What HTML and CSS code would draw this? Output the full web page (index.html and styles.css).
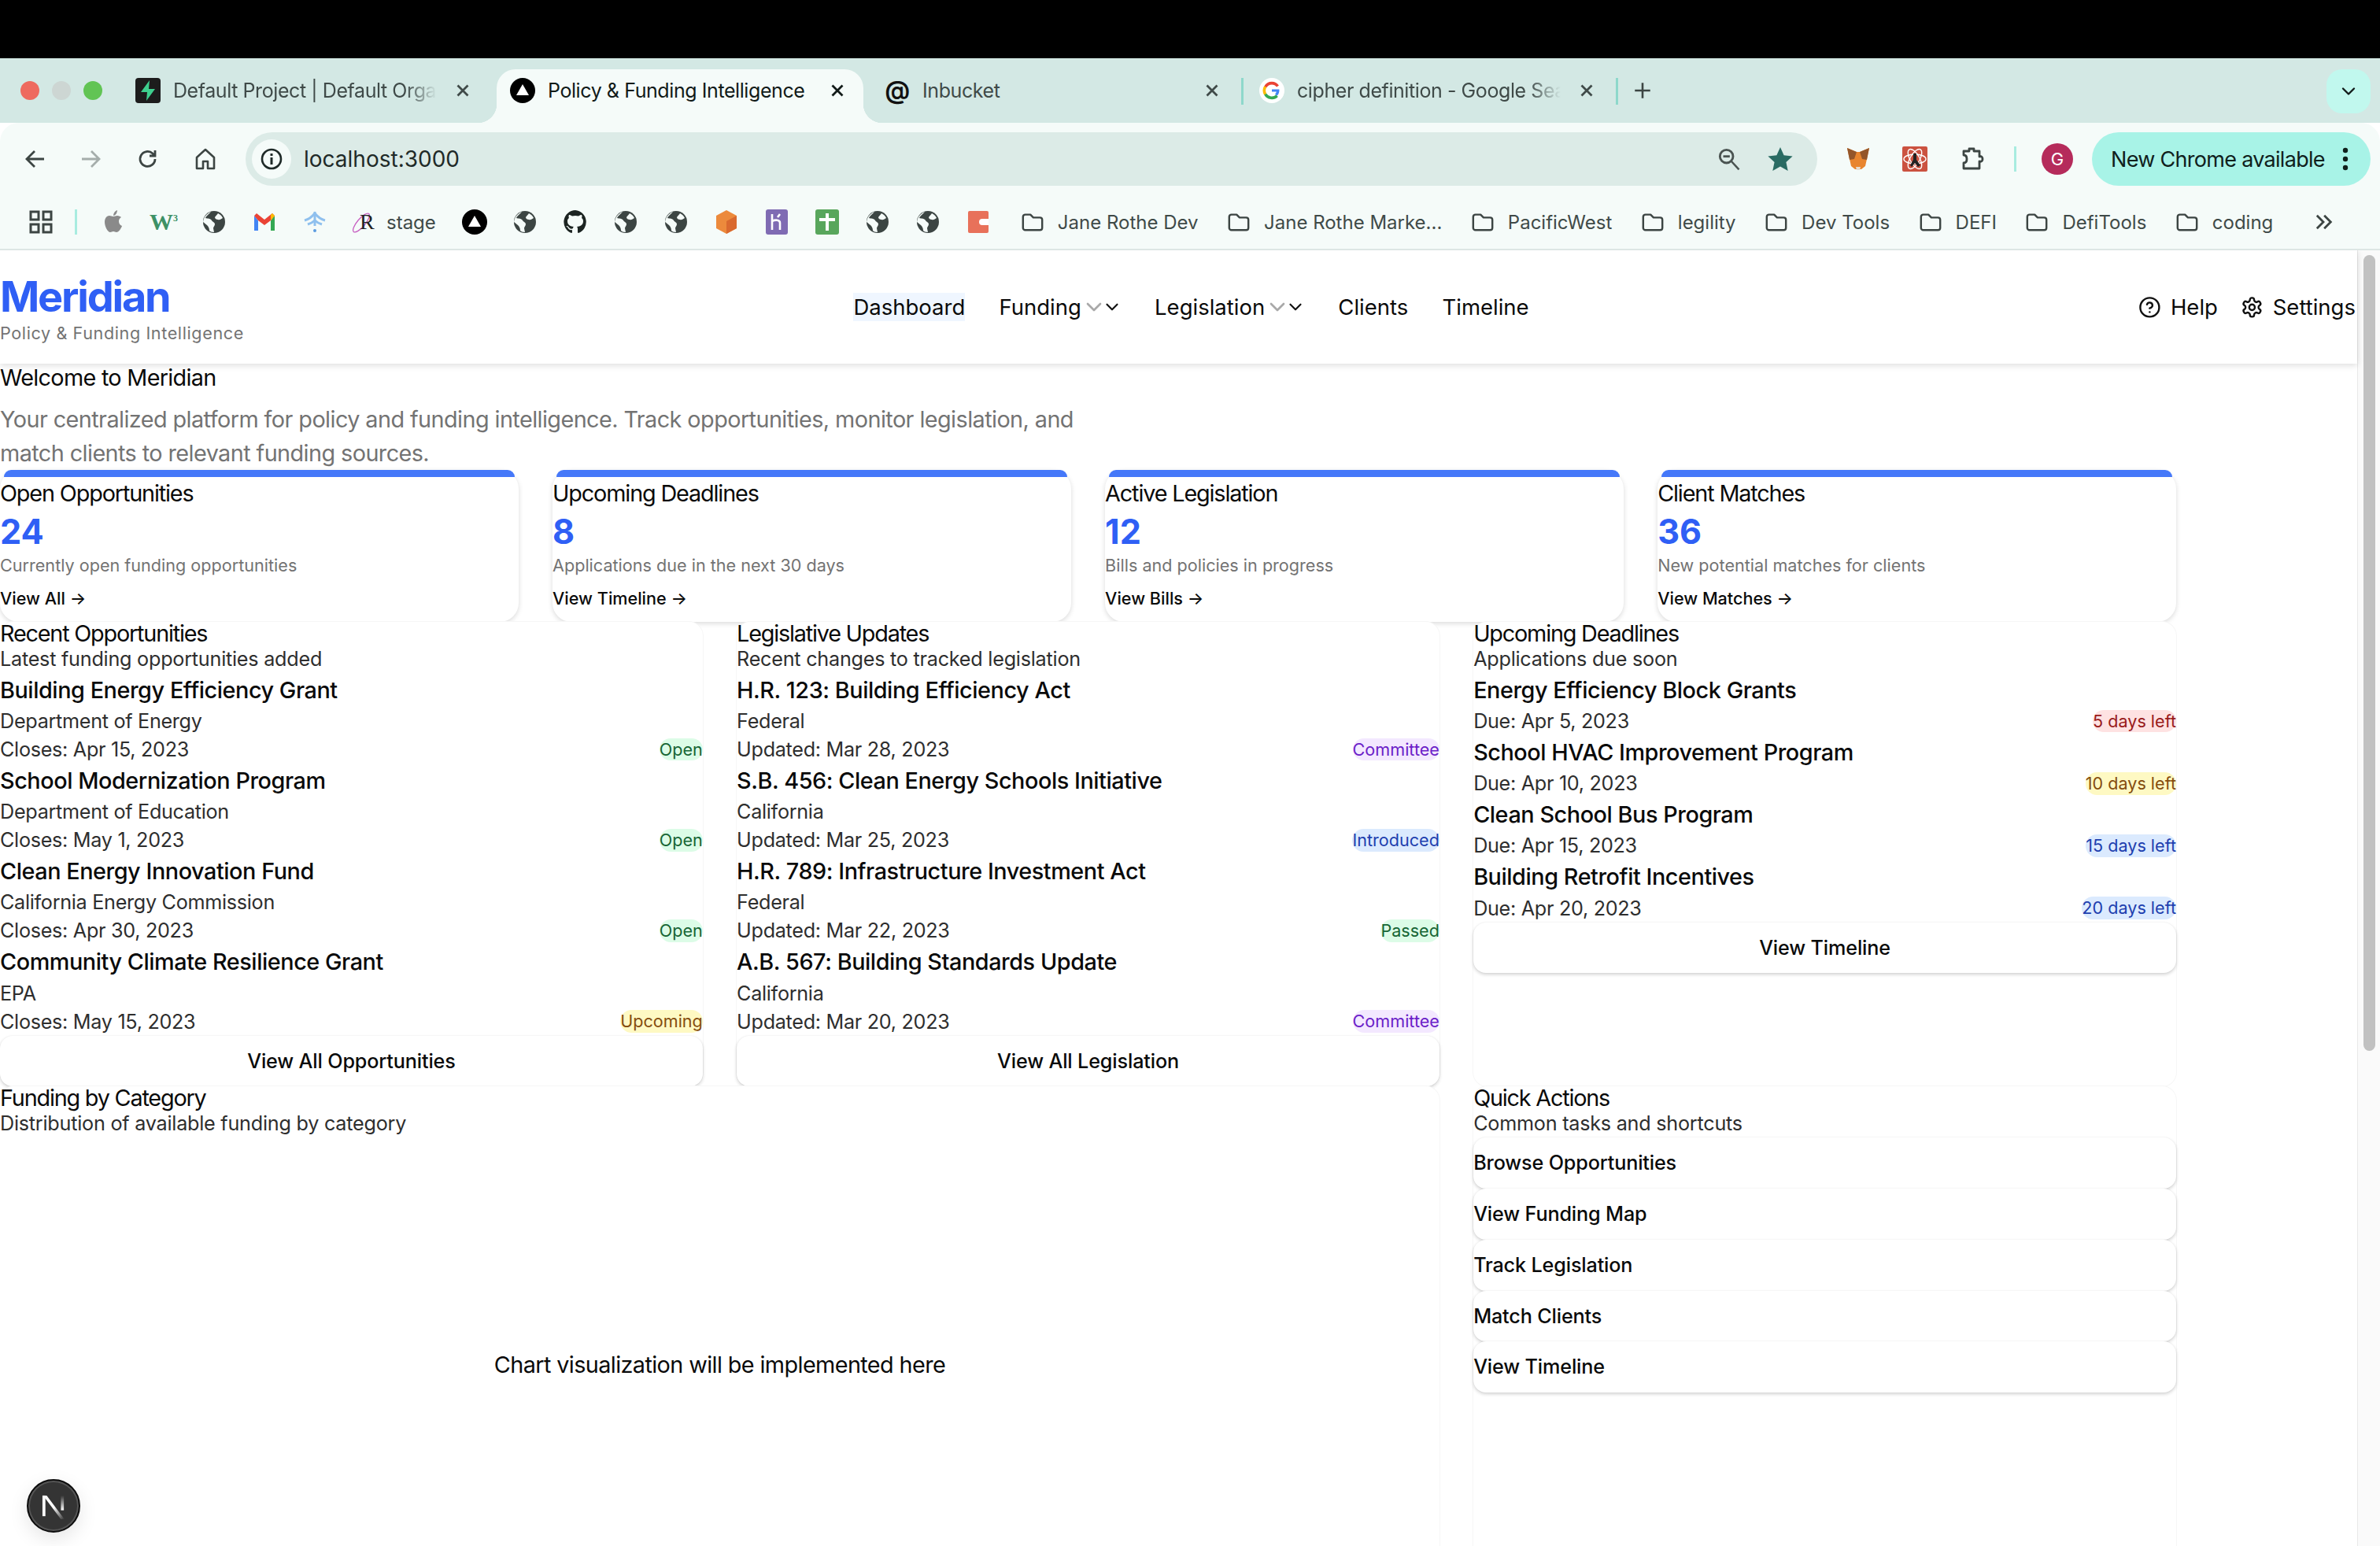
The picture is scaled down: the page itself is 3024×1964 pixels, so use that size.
FILE: index.html
```html
<!DOCTYPE html>
<html lang="en">
<head>
  <meta charset="UTF-8">
  <title>Policy &amp; Funding Intelligence</title>
  <link rel="stylesheet" href="styles.css">
</head>
<body>
  <svg class="sprites" width="0" height="0">
    <symbol id="globe" viewBox="0 0 32 32">
      <circle cx="16" cy="16" r="14" fill="#3c4543"/>
      <path d="M12 3c-2 3-6 5-7 8 3 1 6 0 8 3 1 2 4 2 4 5 0 2-2 3-2 5l1 5c-3 0-5-1-6-2 0-3-1-5-3-7-2-1-3-3-5-4 1-7 5-11 10-13zM21 5c2 1 5 3 6 6-2 1-4 3-6 2-2 0-4-1-4-3 1-2 3-3 4-5z" fill="#f5fbf9"/>
    </symbol>
    <symbol id="folder" viewBox="0 0 32 32">
      <path d="M3 9a3 3 0 0 1 3-3h7l4 4h9a3 3 0 0 1 3 3v11a3 3 0 0 1-3 3H6a3 3 0 0 1-3-3z" fill="none" stroke="#3c4543" stroke-width="2.6" stroke-linejoin="round"/>
    </symbol>
    <symbol id="close-x" viewBox="0 0 24 24">
      <path d="M6 6l12 12M18 6L6 18" fill="none" stroke="currentColor" stroke-width="2.6"/>
    </symbol>
    <symbol id="triangle-logo" viewBox="0 0 32 32">
      <circle cx="16" cy="16" r="16" fill="#000"/>
      <path d="M16 8l8 14H8z" fill="#fff"/>
    </symbol>
    <symbol id="chev" viewBox="0 0 24 24">
      <path d="M6 9l6 6 6-6" fill="none" stroke="currentColor" stroke-width="2" stroke-linecap="round" stroke-linejoin="round"/>
    </symbol>
  </svg>

  <div class="black-bar"></div>

  <div class="tabstrip">
    <div class="traffic">
      <span class="light red"></span>
      <span class="light grey"></span>
      <span class="light green"></span>
    </div>
    <div class="tab">
      <svg class="favicon" viewBox="0 0 32 32"><rect width="32" height="32" rx="4" fill="#1c1c1c"/><path d="M18 3L7 18h8l-1 11 11-15h-8z" fill="#3ecf8e"/></svg>
      <span class="tab-title fade">Default Project | Default Orga</span>
      <svg class="tab-close"><use href="#close-x"/></svg>
    </div>
    <div class="tab-sep"></div>
    <div class="tab active">
      <svg class="favicon"><use href="#triangle-logo"/></svg>
      <span class="tab-title">Policy &amp; Funding Intelligence</span>
      <svg class="tab-close"><use href="#close-x"/></svg>
    </div>
    <div class="tab-sep"></div>
    <div class="tab">
      <span class="favicon at-sign">@</span>
      <span class="tab-title">Inbucket</span>
      <svg class="tab-close"><use href="#close-x"/></svg>
    </div>
    <div class="tab-sep line"></div>
    <div class="tab">
      <svg class="favicon" viewBox="0 0 32 32">
        <circle cx="16" cy="16" r="16" fill="#fff"/>
        <path d="M23.5 10.5A9.5 9.5 0 0 0 16 6.6" fill="none" stroke="#ea4335" stroke-width="3.6"/>
        <path d="M16 6.6a9.5 9.5 0 0 0-8.3 4.9" fill="none" stroke="#ea4335" stroke-width="3.6"/>
        <path d="M7.7 11.2a9.5 9.5 0 0 0 0 9.6" fill="none" stroke="#fbbc05" stroke-width="3.6"/>
        <path d="M7.7 20.6A9.5 9.5 0 0 0 22.6 22.6" fill="none" stroke="#34a853" stroke-width="3.6"/>
        <path d="M16 14.4h9.4c.4 3-.6 6-2.8 8.2l-2.6-2.2c1-.8 1.6-1.8 1.8-3H16z" fill="#4285f4"/>
      </svg>
      <span class="tab-title fade">cipher definition - Google Sea</span>
      <svg class="tab-close"><use href="#close-x"/></svg>
    </div>
    <div class="tab-sep line"></div>
    <svg class="new-tab" viewBox="0 0 24 24"><path d="M12 3v18M3 12h18" fill="none" stroke="#3c4543" stroke-width="2.4"/></svg>
    <div class="tab-search"><svg class="tab-search-icon"><use href="#chev"/></svg></div>
  </div>

  <div class="chrome-body">
    <div class="toolbar">
      <div class="nav-btns">
        <svg class="tool-icon" viewBox="0 0 32 32"><path d="M27 16H6M15 6L5 16l10 10" fill="none" stroke="#3c4543" stroke-width="2.8"/></svg>
        <svg class="tool-icon" viewBox="0 0 32 32"><path d="M5 16h21M17 6l10 10-10 10" fill="none" stroke="#a5adab" stroke-width="2.8"/></svg>
        <svg class="tool-icon" viewBox="0 0 32 32"><path d="M25 16a9.500 9.500 0 1 1-3-7l3 3M25 5v7h-7" fill="none" stroke="#3c4543" stroke-width="2.8"/></svg>
        <svg class="tool-icon" viewBox="0 0 32 32"><path d="M5 14L16 4l11 10v14h-8v-9h-6v9H5z" fill="none" stroke="#3c4543" stroke-width="2.6" stroke-linejoin="round"/></svg>
      </div>
      <div class="omnibox">
        <span class="info-chip">
          <svg viewBox="0 0 32 32"><circle cx="16" cy="16" r="12" fill="none" stroke="#1f2a28" stroke-width="2.6"/><path d="M16 14v9M16 9v3" stroke="#1f2a28" stroke-width="3"/></svg>
        </span>
        <span class="url">localhost:3000</span>
        <svg class="omni-icon zoom-out" viewBox="0 0 36 36"><circle cx="14" cy="14" r="10" fill="none" stroke="#4a5351" stroke-width="3.400"/><path d="M9 14h10" stroke="#4a5351" stroke-width="3.400"/><path d="M21 21l12 13" stroke="#4a5351" stroke-width="3"/></svg>
        <svg class="omni-icon" viewBox="0 0 36 36"><path d="M18 3l4.600 10.200 11 1.300-8.200 7.500 2.300 11L18 27.400 8.300 33l2.300-11-8.200-7.500 11-1.300z" fill="#2a6b63"/></svg>
      </div>
      <div class="extensions">
        <svg class="ext-icon" viewBox="0 0 32 32">
          <path d="M2 2l12 5h4l12-5-3 14-2 9-5 4h-8l-5-4-2-9z" fill="#e8852f"/>
          <path d="M2 2l12 5-3 9-6 1zM30 2l-12 5 3 9 6 1z" fill="#94562a"/>
          <path d="M13 26h6l-1 4h-4z" fill="#e6dcd0"/>
        </svg>
        <svg class="ext-icon" viewBox="0 0 32 32">
          <rect width="32" height="32" rx="2" fill="#cb5240"/>
          <g fill="none" stroke="#fff" stroke-width="1.400"><ellipse cx="16" cy="16" rx="14" ry="6"/><ellipse cx="16" cy="16" rx="14" ry="6" transform="rotate(60 16 16)"/><ellipse cx="16" cy="16" rx="14" ry="6" transform="rotate(120 16 16)"/></g>
          <path d="M14 9h4v8l5 7-3 2-4-5-4 5-2-2 4-7z" fill="#222"/>
        </svg>
        <svg class="ext-icon" viewBox="0 0 32 32"><path d="M13 6V3h6v3h7v7c3-1 4 1 4 3s-1 4-4 3v9H6v-7c3 0 4-2 4-5s-1-5-4-5V6z" fill="none" stroke="#3c4543" stroke-width="2.800" stroke-linejoin="round"/></svg>
      </div>
      <span class="tool-sep"></span>
      <span class="avatar">G</span>
      <div class="update-pill">
        <span>New Chrome available</span>
        <svg class="dots" viewBox="0 0 8 32"><circle cx="4" cy="5" r="3.200"/><circle cx="4" cy="16" r="3.200"/><circle cx="4" cy="27" r="3.200"/></svg>
      </div>
    </div>

    <div class="bookmarks">
      <svg class="bm-grid" viewBox="0 0 32 32"><g fill="none" stroke="#3c4543" stroke-width="3"><rect x="3" y="3" width="10" height="10"/><rect x="19" y="3" width="10" height="10"/><rect x="3" y="19" width="10" height="10"/><rect x="19" y="19" width="10" height="10"/></g></svg>
      <span class="bm-sep"></span>
      <span class="bm-icon"><svg viewBox="0 0 32 32"><path d="M21 8c-2 0-3 1-5 1s-3-1-5-1c-4 0-6 4-6 8 0 6 4 13 7 13 2 0 2-1 4-1s2 1 4 1c3 0 6-5 7-8-3-1-4-4-4-6s1-4 3-5c-1-1-3-2-5-2zM16 8c0-3 2-6 5-7 0 3-2 7-5 7z" fill="#8a8a8a"/></svg></span>
      <span class="bm-icon"><span class="w3">W<sup>3</sup></span></span>
      <span class="bm-icon"><svg><use href="#globe"/></svg></span>
      <span class="bm-icon"><svg viewBox="0 0 32 32">
        <path d="M3 8v19h5V14z" fill="#4285f4"/>
        <path d="M29 8v19h-5V14z" fill="#34a853"/>
        <path d="M3 8l5 6 8 6 8-6 5-6-3-3-10 8L6 5z" fill="#ea4335"/>
        <path d="M24 14l5-6-3-3-2 2z" fill="#fbbc05"/>
      </svg></span>
      <span class="bm-icon"><svg viewBox="0 0 32 32"><g fill="none" stroke="#8fc0ee" stroke-width="3"><path d="M16 3v18"/><path d="M3 14c4-1 9-4 13-9 4 5 9 8 13 9"/><path d="M7 19c3-1 6-2 9-5 3 3 6 4 9 5"/></g><circle cx="16" cy="27" r="2" fill="#5b9be0"/></svg></span>
      <span class="bm-stage">
        <span class="stage-logo">
          <svg viewBox="0 0 32 32"><ellipse cx="14" cy="17" rx="15" ry="5" transform="rotate(-50 14 17)" fill="none" stroke="#c75fc2" stroke-width="1.300"/></svg>
          <span class="stage-r">R</span>
        </span>
        <span>stage</span>
      </span>
      <span class="bm-icon"><svg><use href="#triangle-logo"/></svg></span>
      <span class="bm-icon"><svg><use href="#globe"/></svg></span>
      <span class="bm-icon"><svg viewBox="0 0 32 32"><path d="M16 1a15 15 0 0 0-5 29c1 0 1-1 1-1v-3c-4 1-5-2-5-2-1-2-2-2-2-2-1-1 0-1 0-1 2 0 3 2 3 2 1 2 4 2 5 1 0-1 .500-2 1-2-4-.500-8-2-8-7 0-2 .500-3 2-4-.200-.500-1-2 0-4 0 0 1-.500 4 1.500a14 14 0 0 1 8 0c3-2 4-1.500 4-1.500 1 2 .200 3.500 0 4 1.500 1 2 2 2 4 0 5-4 6.500-8 7 .700.500 1 1.500 1 3v4s0 1 1 1A15 15 0 0 0 16 1z" fill="#1c2422"/></svg></span>
      <span class="bm-icon"><svg><use href="#globe"/></svg></span>
      <span class="bm-icon"><svg><use href="#globe"/></svg></span>
      <span class="bm-icon"><svg viewBox="0 0 32 32"><path d="M16 1l13 7v16l-13 7-13-7V8z" fill="#ec8a3c"/><path d="M16 15l13-7v16l-13 7z" fill="#d9692f"/></svg></span>
      <span class="bm-icon"><svg viewBox="0 0 32 32"><rect x="2" width="28" height="32" rx="3" fill="#7f6bb3"/><path d="M10 6v20M10 15c4-2 10-2 10 2v9M20 6l-3 4" fill="none" stroke="#fff" stroke-width="2.600"/></svg></span>
      <span class="bm-icon"><svg viewBox="0 0 32 32"><rect x="1" width="30" height="32" rx="3" fill="#58a65c"/><path d="M16 5v22M6 13h20" stroke="#fff" stroke-width="4"/></svg></span>
      <span class="bm-icon"><svg><use href="#globe"/></svg></span>
      <span class="bm-icon"><svg><use href="#globe"/></svg></span>
      <span class="bm-icon"><svg viewBox="0 0 32 32"><rect x="3" y="2" width="26" height="28" rx="2" fill="#e8715a"/><path d="M29 12h-8a4 4 0 0 0 0 8h8z" fill="#fff"/></svg></span>
      <span class="bm-folder first"><svg><use href="#folder"/></svg>Jane Rothe Dev</span>
      <span class="bm-folder"><svg><use href="#folder"/></svg>Jane Rothe Marke...</span>
      <span class="bm-folder"><svg><use href="#folder"/></svg>PacificWest</span>
      <span class="bm-folder"><svg><use href="#folder"/></svg>legility</span>
      <span class="bm-folder"><svg><use href="#folder"/></svg>Dev Tools</span>
      <span class="bm-folder"><svg><use href="#folder"/></svg>DEFI</span>
      <span class="bm-folder"><svg><use href="#folder"/></svg>DefiTools</span>
      <span class="bm-folder"><svg><use href="#folder"/></svg>coding</span>
      <svg class="bm-more" viewBox="0 0 24 24"><path d="M5 5l7 7-7 7M13 5l7 7-7 7" fill="none" stroke="#3c4543" stroke-width="2.400"/></svg>
    </div>
  </div>

  <div class="viewport">
    <div class="page">
      <header class="site-header">
        <div class="logo">
          <div class="logo-name">Meridian</div>
          <div class="logo-sub">Policy &amp; Funding Intelligence</div>
        </div>
        <nav class="main-nav">
          <a class="nav-link current">Dashboard</a>
          <a class="nav-link">Funding<svg class="caret faded"><use href="#chev"/></svg><svg class="caret"><use href="#chev"/></svg></a>
          <a class="nav-link">Legislation<svg class="caret faded"><use href="#chev"/></svg><svg class="caret"><use href="#chev"/></svg></a>
          <a class="nav-link">Clients</a>
          <a class="nav-link">Timeline</a>
        </nav>
        <div class="header-actions">
          <a class="action">
            <svg class="lucide" viewBox="0 0 24 24"><circle cx="12" cy="12" r="10"/><path d="M9.090 9a3 3 0 0 1 5.830 1c0 2-3 3-3 3"/><path d="M12 17h.010"/></svg>
            Help
          </a>
          <a class="action">
            <svg class="lucide" viewBox="0 0 24 24"><path d="M12.220 2h-.440a2 2 0 0 0-2 2v.180a2 2 0 0 1-1 1.730l-.430.250a2 2 0 0 1-2 0l-.150-.080a2 2 0 0 0-2.730.730l-.220.380a2 2 0 0 0 .730 2.730l.150.100a2 2 0 0 1 1 1.720v.510a2 2 0 0 1-1 1.740l-.150.090a2 2 0 0 0-.730 2.730l.220.380a2 2 0 0 0 2.730.730l.150-.080a2 2 0 0 1 2 0l.430.250a2 2 0 0 1 1 1.730V20a2 2 0 0 0 2 2h.440a2 2 0 0 0 2-2v-.180a2 2 0 0 1 1-1.730l.430-.250a2 2 0 0 1 2 0l.150.080a2 2 0 0 0 2.730-.730l.220-.390a2 2 0 0 0-.730-2.730l-.150-.080a2 2 0 0 1-1-1.740v-.500a2 2 0 0 1 1-1.740l.150-.090a2 2 0 0 0 .730-2.730l-.220-.380a2 2 0 0 0-2.730-.730l-.150.080a2 2 0 0 1-2 0l-.430-.250a2 2 0 0 1-1-1.730V4a2 2 0 0 0-2-2z"/><circle cx="12" cy="12" r="3"/></svg>
            Settings
          </a>
        </div>
      </header>

      <main class="content">
        <h1 class="welcome-title">Welcome to Meridian</h1>
        <p class="welcome-text">Your centralized platform for policy and funding intelligence. Track opportunities, monitor legislation, and match clients to relevant funding sources.</p>

        <section class="stats">
          <div class="stat-card">
            <div class="stat-bar"></div>
            <div class="stat-title">Open Opportunities</div>
            <div class="stat-num">24</div>
            <div class="stat-desc">Currently open funding opportunities</div>
            <a class="stat-link">View All →</a>
          </div>
          <div class="stat-card">
            <div class="stat-bar"></div>
            <div class="stat-title">Upcoming Deadlines</div>
            <div class="stat-num">8</div>
            <div class="stat-desc">Applications due in the next 30 days</div>
            <a class="stat-link">View Timeline →</a>
          </div>
          <div class="stat-card">
            <div class="stat-bar"></div>
            <div class="stat-title">Active Legislation</div>
            <div class="stat-num">12</div>
            <div class="stat-desc">Bills and policies in progress</div>
            <a class="stat-link">View Bills →</a>
          </div>
          <div class="stat-card">
            <div class="stat-bar"></div>
            <div class="stat-title">Client Matches</div>
            <div class="stat-num">36</div>
            <div class="stat-desc">New potential matches for clients</div>
            <a class="stat-link">View Matches →</a>
          </div>
        </section>

        <section class="panels">
          <div class="panel">
            <h2 class="panel-title">Recent Opportunities</h2>
            <p class="panel-sub">Latest funding opportunities added</p>
            <div class="item">
              <div class="item-title">Building Energy Efficiency Grant</div>
              <div class="item-line">Department of Energy</div>
              <div class="item-row"><span class="item-line">Closes: Apr 15, 2023</span><span class="badge green">Open</span></div>
            </div>
            <div class="item">
              <div class="item-title">School Modernization Program</div>
              <div class="item-line">Department of Education</div>
              <div class="item-row"><span class="item-line">Closes: May 1, 2023</span><span class="badge green">Open</span></div>
            </div>
            <div class="item">
              <div class="item-title">Clean Energy Innovation Fund</div>
              <div class="item-line">California Energy Commission</div>
              <div class="item-row"><span class="item-line">Closes: Apr 30, 2023</span><span class="badge green">Open</span></div>
            </div>
            <div class="item">
              <div class="item-title">Community Climate Resilience Grant</div>
              <div class="item-line">EPA</div>
              <div class="item-row"><span class="item-line">Closes: May 15, 2023</span><span class="badge yellow">Upcoming</span></div>
            </div>
            <a class="panel-btn">View All Opportunities</a>
          </div>

          <div class="panel">
            <h2 class="panel-title">Legislative Updates</h2>
            <p class="panel-sub">Recent changes to tracked legislation</p>
            <div class="item">
              <div class="item-title">H.R. 123: Building Efficiency Act</div>
              <div class="item-line">Federal</div>
              <div class="item-row"><span class="item-line">Updated: Mar 28, 2023</span><span class="badge purple">Committee</span></div>
            </div>
            <div class="item">
              <div class="item-title">S.B. 456: Clean Energy Schools Initiative</div>
              <div class="item-line">California</div>
              <div class="item-row"><span class="item-line">Updated: Mar 25, 2023</span><span class="badge blue">Introduced</span></div>
            </div>
            <div class="item">
              <div class="item-title">H.R. 789: Infrastructure Investment Act</div>
              <div class="item-line">Federal</div>
              <div class="item-row"><span class="item-line">Updated: Mar 22, 2023</span><span class="badge green">Passed</span></div>
            </div>
            <div class="item">
              <div class="item-title">A.B. 567: Building Standards Update</div>
              <div class="item-line">California</div>
              <div class="item-row"><span class="item-line">Updated: Mar 20, 2023</span><span class="badge purple">Committee</span></div>
            </div>
            <a class="panel-btn">View All Legislation</a>
          </div>

          <div class="panel">
            <h2 class="panel-title">Upcoming Deadlines</h2>
            <p class="panel-sub">Applications due soon</p>
            <div class="item">
              <div class="item-title">Energy Efficiency Block Grants</div>
              <div class="item-row"><span class="item-line">Due: Apr 5, 2023</span><span class="badge red">5 days left</span></div>
            </div>
            <div class="item">
              <div class="item-title">School HVAC Improvement Program</div>
              <div class="item-row"><span class="item-line">Due: Apr 10, 2023</span><span class="badge yellow">10 days left</span></div>
            </div>
            <div class="item">
              <div class="item-title">Clean School Bus Program</div>
              <div class="item-row"><span class="item-line">Due: Apr 15, 2023</span><span class="badge blue">15 days left</span></div>
            </div>
            <div class="item">
              <div class="item-title">Building Retrofit Incentives</div>
              <div class="item-row"><span class="item-line">Due: Apr 20, 2023</span><span class="badge blue">20 days left</span></div>
            </div>
            <a class="panel-btn">View Timeline</a>
          </div>

          <div class="panel wide">
            <h2 class="panel-title">Funding by Category</h2>
            <p class="panel-sub">Distribution of available funding by category</p>
            <div class="chart-placeholder">Chart visualization will be implemented here</div>
          </div>

          <div class="panel">
            <h2 class="panel-title">Quick Actions</h2>
            <p class="panel-sub">Common tasks and shortcuts</p>
            <a class="panel-btn left">Browse Opportunities</a>
            <a class="panel-btn left">View Funding Map</a>
            <a class="panel-btn left">Track Legislation</a>
            <a class="panel-btn left">Match Clients</a>
            <a class="panel-btn left">View Timeline</a>
          </div>
        </section>
      </main>
    </div>
    <div class="scrollbar"><div class="scroll-thumb"></div></div>

    <div class="next-badge">
      <svg viewBox="0 0 32 32">
        <defs>
          <linearGradient id="n-fade" x1="0" y1="0" x2="0" y2="1"><stop offset="0" stop-color="#fff" stop-opacity="0"/><stop offset="1" stop-color="#fff"/></linearGradient>
          <linearGradient id="n-fade2" x1="0" y1="0" x2="1" y2="1"><stop offset="0.500" stop-color="#fff"/><stop offset="1" stop-color="#fff" stop-opacity="0"/></linearGradient>
        </defs>
        <rect x="8.500" y="9" width="2" height="14" fill="#fff"/>
        <rect x="21" y="9" width="2" height="10" fill="url(#n-fade)"/>
        <path d="M9 9h2.400l12 16h-2.400z" fill="url(#n-fade2)"/>
      </svg>
    </div>
  </div>
</body>
</html>
```

FILE: styles.css
```css
* {
  box-sizing: border-box;
}
html, body {
  height: 100%;
}
body {
  margin: 0;
  height: 1964px;
  display: flex;
  flex-direction: column;
  overflow: hidden;
  font-family: Inter, "Liberation Sans", sans-serif;
  color: #0a0a0a;
  background: #fff;
}
.sprites {
  position: absolute;
}
a {
  color: inherit;
  text-decoration: none;
}

/* browser chrome */
.black-bar {
  height: 74px;
  background: #000;
}
.tabstrip {
  height: 82px;
  padding-top: 14px;
  display: flex;
  background: #d3e8e4;
}
.traffic {
  width: 155px;
  height: 54px;
  padding-left: 26px;
  display: flex;
  align-items: center;
  gap: 16px;
}
.light {
  width: 24px;
  height: 24px;
  border-radius: 50%;
}
.light.red { background: #ee6a5f; }
.light.grey { background: #cdd6d3; }
.light.green { background: #61c454; }
.tab {
  position: relative;
  width: 466px;
  height: 68px;
  padding: 0 20px 14px 17px;
  display: flex;
  align-items: center;
  gap: 16px;
  font-size: 25px;
  letter-spacing: -0.420px;
  color: #3f4a48;
  border-radius: 24px 24px 0 0;
}
.tab.active {
  color: #111a18;
  background: #f5fbf9;
}
.tab.active::before,
.tab.active::after {
  content: "";
  position: absolute;
  bottom: 0;
  width: 24px;
  height: 24px;
}
.tab.active::before {
  left: -24px;
  background: radial-gradient(circle at 0 0, #d3e8e4 24px, #f5fbf9 24.500px);
}
.tab.active::after {
  right: -24px;
  background: radial-gradient(circle at 100% 0, #d3e8e4 24px, #f5fbf9 24.500px);
}
.favicon {
  flex: none;
  width: 32px;
  height: 32px;
}
.at-sign {
  font-size: 32px;
  line-height: 32px;
  font-weight: 600;
  color: #111;
  text-align: center;
}
.tab-title {
  flex: 1;
  min-width: 0;
  white-space: nowrap;
}
.tab-title.fade {
  mask-image: linear-gradient(to left, transparent 4px, #000 44px);
}
.tab-close {
  flex: none;
  width: 26px;
  height: 26px;
}
.tab-sep {
  width: 10px;
  height: 34px;
  margin-top: 11px;
}
.tab-sep.line {
  background: linear-gradient(#8ed8cb, #8ed8cb) center / 3px 100% no-repeat;
}
.new-tab {
  width: 26px;
  height: 26px;
  margin: 14px 0 0 15px;
}
.tab-search {
  width: 56px;
  height: 56px;
  margin: 0 12px 0 auto;
  display: flex;
  align-items: center;
  justify-content: center;
  background: #c1f8ee;
  border-radius: 20px;
}
.tab-search-icon {
  width: 28px;
  height: 28px;
  color: #111a18;
}
.chrome-body {
  background: #f5fbf9;
  border-radius: 24px 24px 0 0;
  border-bottom: 2px solid #dde6e4;
}
.toolbar {
  height: 92px;
  padding: 12px 12px 12px 6px;
  display: flex;
  align-items: center;
}
.nav-btns {
  display: flex;
  width: 292px;
  margin-right: 14px;
}
.tool-icon {
  width: 32px;
  height: 32px;
  margin: 0 20px;
  flex: none;
}
.nav-btns .tool-icon:not(:last-child) {
  margin-right: 21px;
}
.nav-btns .tool-icon:first-child {
  margin: 0 18px 0 23px;
}
.omnibox {
  flex: 1;
  height: 68px;
  padding: 0 29px 0 8px;
  display: flex;
  align-items: center;
  gap: 16px;
  background: #dcebe7;
  border-radius: 34px;
}
.info-chip {
  width: 50px;
  height: 50px;
  padding: 9px;
  background: #f5fbf9;
  border-radius: 50%;
}
.info-chip svg {
  display: block;
  width: 32px;
  height: 32px;
}
.url {
  font-size: 28px;
  color: #1f2a28;
}
.omni-icon {
  width: 36px;
  height: 36px;
}
.zoom-out {
  width: 30px;
  height: 30px;
  margin-left: auto;
  margin-right: 16px;
}
.extensions {
  display: flex;
  margin-left: 16px;
}
.ext-icon {
  width: 32px;
  height: 32px;
  margin: 0 20px;
}
.tool-sep {
  width: 3px;
  height: 32px;
  margin-left: 18px;
  background: #a8ece0;
}
.avatar {
  width: 40px;
  height: 40px;
  margin: 0 24px 0 32px;
  display: flex;
  align-items: center;
  justify-content: center;
  font-size: 22px;
  color: #fff;
  background: #b52b5b;
  border-radius: 50%;
}
.update-pill {
  width: 354px;
  height: 68px;
  padding: 0 28px 0 24px;
  display: flex;
  align-items: center;
  justify-content: space-between;
  font-size: 27px;
  letter-spacing: -0.700px;
  color: #10201c;
  background: #a8f3e7;
  border-radius: 34px;
}
.dots {
  width: 8px;
  height: 32px;
  fill: #10201c;
}
.bookmarks {
  height: 68px;
  padding: 0 0 0 36px;
  display: flex;
  align-items: center;
  font-size: 24px;
  color: #3f4a48;
  white-space: nowrap;
}
.bm-grid {
  width: 32px;
  height: 32px;
}
.bm-sep {
  width: 3px;
  height: 32px;
  margin: 0 14px 0 27px;
  background: #a8ece0;
}
.bm-icon {
  flex: none;
  width: 64px;
  height: 32px;
  display: flex;
  justify-content: center;
  align-items: center;
}
.bm-icon svg {
  width: 32px;
  height: 32px;
}
.w3 {
  font: bold 30px "Liberation Serif", serif;
  color: #3d9166;
}
.w3 sup {
  font-size: 12px;
}
.bm-stage {
  flex: none;
  padding-right: 17px;
  display: flex;
  align-items: center;
  gap: 16px;
}
.stage-logo {
  position: relative;
  width: 28px;
  height: 32px;
  margin-left: 15px;
}
.stage-logo svg {
  position: absolute;
  width: 32px;
  height: 32px;
  left: -2px;
}
.stage-r {
  position: absolute;
  left: 10px;
  top: 0;
  font: 28px/32px "Liberation Serif", serif;
  color: #222;
}
.bm-folder {
  flex: none;
  margin-right: 36.500px;
  display: flex;
  align-items: center;
  gap: 17px;
}
.bm-folder.first {
  margin-left: 22px;
}
.bm-folder svg {
  width: 30px;
  height: 30px;
}
.bm-more {
  width: 28px;
  height: 28px;
  margin: 0 58px 0 auto;
}

/* page */
.viewport {
  flex: 1;
  min-height: 0;
  display: flex;
  position: relative;
  overflow: hidden;
}
.page {
  width: 2995px;
  flex: none;
}
.scrollbar {
  flex: 1;
  padding: 6px 6px 0 7px;
  background: #fafafa;
  border-left: 1px solid #e8e8e8;
}
.scroll-thumb {
  height: 1011px;
  background: #c1c1c1;
  border-radius: 8px;
}
.site-header {
  height: 144px;
  padding-right: 2px;
  display: flex;
  align-items: center;
  justify-content: space-between;
  background: #fff;
  box-shadow: 0 2px 8px rgba(0, 0, 0, 0.14);
  position: relative;
}
.logo {
  padding-top: 5px;
}
.logo-name {
  font-size: 54px;
  line-height: 58px;
  font-weight: 700;
  letter-spacing: -2.200px;
  color: #2f5ff5;
}
.logo-sub {
  margin-top: 3px;
  font-size: 21.600px;
  line-height: 28.800px;
  letter-spacing: 0.600px;
  color: #737373;
}
.main-nav {
  display: flex;
  align-items: center;
  gap: 43.200px;
}
.nav-link {
  display: flex;
  align-items: center;
  font-size: 27.500px;
  line-height: 36px;
}
.nav-link.current {
  background: #eff6ff;
}
.caret {
  width: 26px;
  height: 26px;
  margin: 0 -2px 0 -4px;
  color: #111;
}
.caret.faded {
  width: 32px;
  height: 32px;
  margin: 0 -2px 0 0;
  color: #a9a9a9;
}
.header-actions {
  display: flex;
  gap: 29px;
}
.action {
  display: flex;
  align-items: center;
  gap: 12px;
  font-size: 27.500px;
}
.lucide {
  width: 28.800px;
  height: 28.800px;
  fill: none;
  stroke: #111;
  stroke-width: 2;
  stroke-linecap: round;
  stroke-linejoin: round;
}
.content {
  width: 2765px;
}
.welcome-title {
  margin: 0 0 13px;
  font-size: 28.800px;
  line-height: 36px;
  font-weight: 400;
  letter-spacing: -0.700px;
}
.welcome-text {
  max-width: 1440px;
  margin: 0;
  font-size: 28.800px;
  line-height: 43px;
  letter-spacing: -0.570px;
  color: #737373;
}
.stats {
  display: grid;
  grid-template-columns: repeat(4, 1fr);
  gap: 43.200px;
}
.stat-card {
  height: 193px;
  border-radius: 24px;
  background: #fff;
  box-shadow: 0 2px 6px rgba(0, 0, 0, 0.15);
}
.stat-bar {
  height: 9px;
  margin: 0 5px;
  background: #4578f9;
  border-radius: 14px 14px 0 0;
}
.stat-title {
  font-size: 28.800px;
  line-height: 42px;
  letter-spacing: -1.150px;
}
.stat-num {
  font-size: 43.200px;
  line-height: 54px;
  font-weight: 700;
  color: #2f5ff5;
}
.stat-desc {
  margin-top: -2px;
  font-size: 21.600px;
  line-height: 36px;
  color: #737373;
}
.stat-link {
  display: block;
  margin-top: 6px;
  font-size: 21.600px;
  line-height: 36px;
  font-weight: 500;
}
.panels {
  display: grid;
  grid-template-columns: repeat(3, 1fr);
  column-gap: 43.200px;
}
.panel {
  background: #fff;
  border-radius: 18px;
  box-shadow: 0 0 0 1px #f6f6f6;
}
.panel.wide {
  grid-column: span 2;
}
.panel-title {
  margin: 0;
  padding-top: 2px;
  font-size: 28.800px;
  line-height: 26.800px;
  font-weight: 400;
  letter-spacing: -1.200px;
}
.panel-sub {
  margin: 0;
  font-size: 25.200px;
  line-height: 36px;
  letter-spacing: -0.240px;
  color: #2e2e2e;
}
.item-title {
  font-size: 28.800px;
  line-height: 43.200px;
  font-weight: 500;
  letter-spacing: -0.440px;
}
.item-line {
  font-size: 25.200px;
  line-height: 36px;
  letter-spacing: -0.300px;
  color: #2e2e2e;
}
.item-row {
  display: flex;
  align-items: center;
  justify-content: space-between;
}
.badge {
  font-size: 21.600px;
  line-height: 28.800px;
  border-radius: 15px;
}
.badge.green { background: #dcfce7; color: #166534; }
.badge.yellow { background: #fef9c3; color: #854d0e; }
.badge.purple { background: #f3e8ff; color: #6b21c8; }
.badge.blue { background: #dbeafe; color: #1e40af; }
.badge.red { background: #fee2e2; color: #991b1b; }
.panel-btn {
  display: block;
  height: 64.800px;
  font-size: 25.200px;
  line-height: 64.800px;
  font-weight: 500;
  letter-spacing: -0.150px;
  text-align: center;
  border-radius: 16px;
  background: #fff;
  box-shadow: 0 2px 4px rgba(0, 0, 0, 0.18), 0 0 2px rgba(0, 0, 0, 0.06);
}
.panel-btn.left {
  text-align: left;
}
.chart-placeholder {
  height: 576px;
  display: flex;
  align-items: center;
  justify-content: center;
  font-size: 28.800px;
  letter-spacing: -0.600px;
}
.next-badge {
  position: absolute;
  left: 34px;
  bottom: 17px;
  width: 68px;
  height: 68px;
  padding: 2px;
  background: #343434;
  border: 2px solid #0d0d0d;
  border-radius: 50%;
  box-shadow: 0 8px 24px rgba(0, 0, 0, 0.1), inset 0 0 0 2px #555;
}
.next-badge svg {
  display: block;
  width: 100%;
  height: 100%;
}
```
